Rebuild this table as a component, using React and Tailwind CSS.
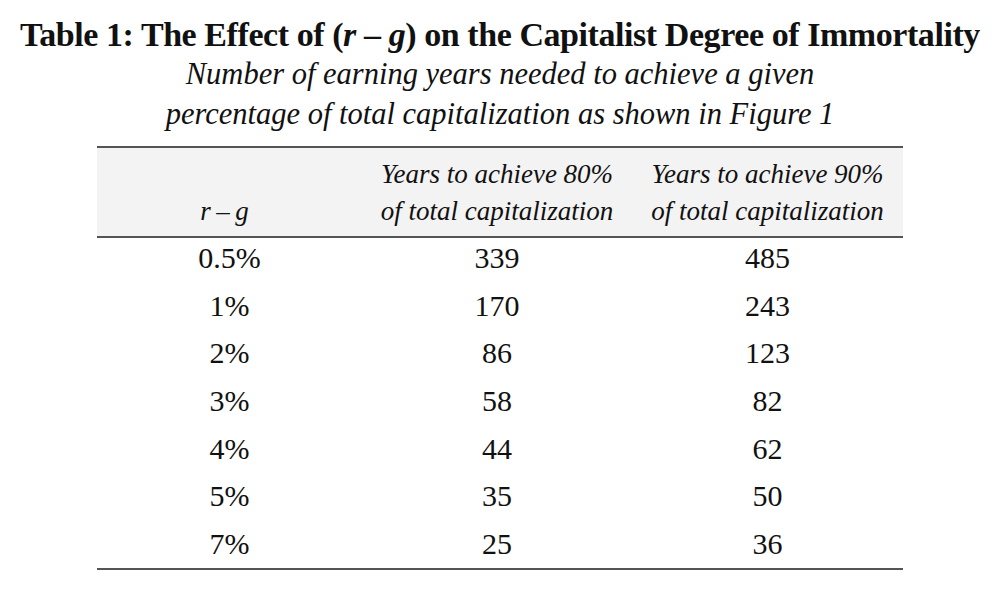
const rows = [
  ['0.5%', '339', '485'],
  ['1%', '170', '243'],
  ['2%', '86', '123'],
  ['3%', '58', '82'],
  ['4%', '44', '62'],
  ['5%', '35', '50'],
  ['7%', '25', '36'],
]

export default function App() {
  return (
    <div className="w-[1000px] h-[593px] bg-white text-[#111] font-['Liberation_Serif',serif] flex flex-col items-center pt-[15px]">
      {/* Title */}
      <h1 className="text-[34px] leading-[40px] font-bold tracking-[-0.43px] whitespace-nowrap">
        Table 1: The Effect of (<i>r</i> – <i>g</i>) on the Capitalist Degree of Immortality
      </h1>
      <p className="italic text-[30.5px] leading-[40px] text-center -mt-[1px]">
        Number of earning years needed to achieve a given<br />
        percentage of total capitalization as shown in Figure 1
      </p>

      {/* Table */}
      <div className="w-[806px] mt-[12px] border-t-2 border-b-2 border-[#555]">
        <div className="grid grid-cols-[265px_270px_271px] bg-[#f3f3f3] border-b-2 border-[#555] h-[90px] items-end pb-[6px] italic text-[27px] leading-[37px] text-center">
          <div className="pr-[10px]">r&thinsp;–&thinsp;g</div>
          <div>Years to achieve 80%<br />of total capitalization</div>
          <div>Years to achieve 90%<br />of total capitalization</div>
        </div>
        {rows.map(([a, b, c]) => (
          <div key={a} className="grid grid-cols-[265px_270px_271px] h-[47.7px] last:h-[43.8px] items-start pt-[5px] text-center text-[30px] leading-[30px]">
            <div>{a}</div>
            <div>{b}</div>
            <div>{c}</div>
          </div>
        ))}
      </div>
    </div>
  )
}
